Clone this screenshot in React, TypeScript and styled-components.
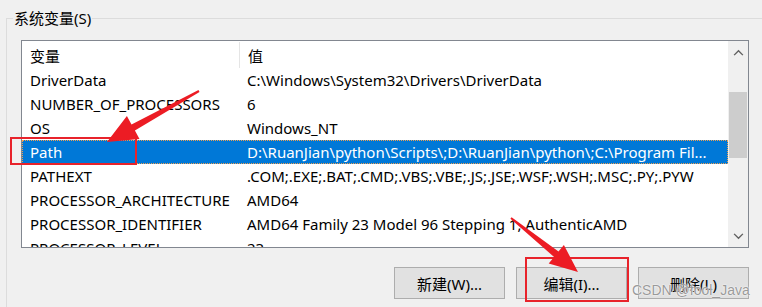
import { ReactElement } from 'react';
import styled, { createGlobalStyle } from 'styled-components';

interface IVariable {
  name: string;
  value: string;
}

const variables: IVariable[] = [
  { name: 'DriverData', value: 'C:\\Windows\\System32\\Drivers\\DriverData' },
  { name: 'NUMBER_OF_PROCESSORS', value: '6' },
  { name: 'OS', value: 'Windows_NT' },
  {
    name: 'Path',
    value:
      'D:\\RuanJian\\python\\Scripts\\;D:\\RuanJian\\python\\;C:\\Program Fil...',
  },
  {
    name: 'PATHEXT',
    value: '.COM;.EXE;.BAT;.CMD;.VBS;.VBE;.JS;.JSE;.WSF;.WSH;.MSC;.PY;.PYW',
  },
  { name: 'PROCESSOR_ARCHITECTURE', value: 'AMD64' },
  {
    name: 'PROCESSOR_IDENTIFIER',
    value: 'AMD64 Family 23 Model 96 Stepping 1, AuthenticAMD',
  },
  { name: 'PROCESSOR_LEVEL', value: '23' },
];

const GlobalStyle = createGlobalStyle`
  html, body {
    margin: 0;
    padding: 0;
    background: #f0f0f0;
  }
`;

export default function App(): ReactElement {
  return (
    <>
      <GlobalStyle />
      <Window>
        <GroupBox>
          <Legend>系统变量(S)</Legend>
          <ListBox>
            <ListContent>
              <HeaderRow>
                <NameCell>变量</NameCell>
                <HeaderDivider />
                <ValueCell>值</ValueCell>
              </HeaderRow>
              {variables.map((variable) => (
                <Row key={variable.name} $selected={variable.name === 'Path'}>
                  <NameCell>{variable.name}</NameCell>
                  <ValueCell>{variable.value}</ValueCell>
                </Row>
              ))}
            </ListContent>
            <ScrollBar>
              <ScrollButton>
                <Chevron viewBox="0 0 12 8">
                  <path d="M1 7 L6 2 L11 7" />
                </Chevron>
              </ScrollButton>
              <ScrollTrack>
                <Thumb />
              </ScrollTrack>
              <ScrollButton>
                <Chevron viewBox="0 0 12 8">
                  <path d="M1 1 L6 6 L11 1" />
                </Chevron>
              </ScrollButton>
            </ScrollBar>
          </ListBox>
          <ButtonRow>
            <Button>新建(W)...</Button>
            <Button>编辑(I)...</Button>
            <Button>删除(L)</Button>
          </ButtonRow>
        </GroupBox>

        <Annotations viewBox="0 0 762 307">
          <rect x="11" y="138" width="125" height="26" />
          <rect x="526" y="258" width="102" height="43" />
          <polygon points="198.5,90.1 131.5,124.4 126.9,116.1 107,142 139.5,138.9 134.9,130.6 199.5,91.9" />
          <polygon points="511.6,217.2 558.5,251.6 563.9,245 578,272 548.7,263.6 554.1,257 510.4,218.8" />
        </Annotations>
        <Watermark>CSDN @fool_Java</Watermark>
      </Window>
    </>
  );
}

const Window = styled.div`
  position: relative;
  width: 762px;
  height: 307px;
  overflow: hidden;
  background: #f0f0f0;
  color: #000;
  font-family: 'Noto Sans', 'Noto Sans CJK SC', sans-serif;
  font-size: 15px;
`;

const GroupBox = styled.fieldset`
  margin: 8px -20px 0 6px;
  padding: 0 0 0 14px;
  min-width: 0;
  height: 320px;
  border: 1px solid #dcdcdc;
  box-sizing: border-box;
`;

const Legend = styled.legend`
  margin-left: -8px;
  padding: 0 1px;
  line-height: 20px;
  font-size: 15px;
  color: #000;
`;

const ListBox = styled.div`
  display: flex;
  margin-top: 12px;
  width: 728px;
  height: 208px;
  border: 1px solid #828790;
  box-sizing: border-box;
  background: #fff;
`;

const ListContent = styled.div`
  flex: 1;
  min-width: 0;
  overflow: hidden;
`;

const HeaderRow = styled.div`
  display: flex;
  align-items: center;
  height: 27px;
  padding-top: 2px;
  box-sizing: border-box;
`;

const HeaderDivider = styled.div`
  width: 1px;
  height: 26px;
  margin-top: -2px;
  background: #e5e5e5;
`;

const Row = styled.div<{ $selected?: boolean }>`
  display: flex;
  align-items: center;
  height: 24px;
  box-sizing: border-box;
  background: ${(p) => (p.$selected ? '#0078d7' : 'transparent')};
  color: ${(p) => (p.$selected ? '#fff' : '#000')};
  outline: ${(p) => (p.$selected ? '1px dotted #f0a050' : 'none')};
  outline-offset: -1px;
`;

const NameCell = styled.div`
  width: 217px;
  flex-shrink: 0;
  padding-left: 8px;
  box-sizing: border-box;
  white-space: nowrap;
  overflow: hidden;
`;

const ValueCell = styled.div`
  flex: 1;
  min-width: 0;
  padding-left: 8px;
  white-space: nowrap;
  overflow: hidden;
`;

const ScrollBar = styled.div`
  display: flex;
  flex-direction: column;
  width: 20px;
  flex-shrink: 0;
  background: #f0f0f0;
`;

const ScrollButton = styled.div`
  display: flex;
  align-items: center;
  justify-content: center;
  height: 22px;
`;

const Chevron = styled.svg`
  width: 11px;
  height: 7px;
  fill: none;
  stroke: #606060;
  stroke-width: 1.6;
`;

const ScrollTrack = styled.div`
  flex: 1;
  padding-top: 29px;
`;

const Thumb = styled.div`
  margin: 0 1px;
  height: 66px;
  background: #cdcdcd;
`;

const ButtonRow = styled.div`
  display: flex;
  justify-content: flex-end;
  gap: 11px;
  width: 728px;
  margin-top: 19px;
`;

const Button = styled.button`
  width: 111px;
  height: 32px;
  padding: 0;
  border: 1px solid #adadad;
  background: #e1e1e1;
  font-family: inherit;
  font-size: 15px;
  color: #000;
`;

const Annotations = styled.svg`
  position: absolute;
  inset: 0;
  width: 762px;
  height: 307px;
  pointer-events: none;

  rect {
    fill: none;
    stroke: #e8232b;
    stroke-width: 2;
  }

  polygon {
    fill: #ec1c24;
  }
`;

const Watermark = styled.div`
  position: absolute;
  left: 632px;
  top: 282px;
  font-family: 'Liberation Sans', Arial, sans-serif;
  font-size: 14px;
  color: #9a9a9a;
  text-shadow:
    0 0 2px #fff,
    0 0 1px #fff;
  white-space: nowrap;
`;
